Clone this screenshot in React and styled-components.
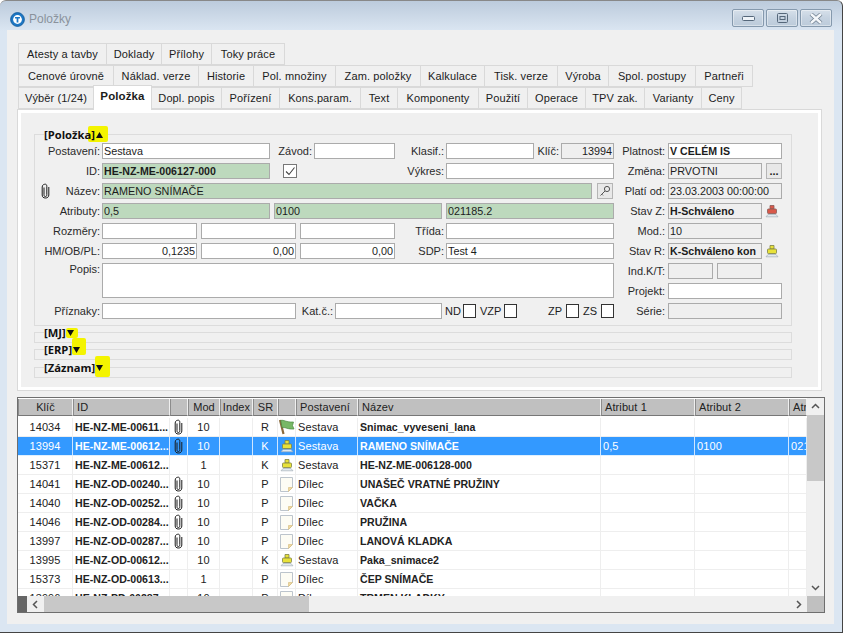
import React from "react";
import styled, { createGlobalStyle } from "styled-components";

const GlobalStyle = createGlobalStyle`
	html, body { margin: 0; padding: 0; background: #fff; }
	* { box-sizing: border-box; }
	body { font-family: "Liberation Sans", Arial, sans-serif; font-size: 11px; color: #1c1c1c; }
`;

const COLS = "55px 97px 18px 32px 33px 25px 18px 62px 243px 94px 94px 18px";

const tabRows = [
	[["Atesty a tavby", 88], ["Doklady", 55], ["Přílohy", 50], ["Toky práce", 73]],
	[["Cenové úrovně", 95], ["Náklad. verze", 85], ["Historie", 55], ["Pol. množiny", 82], ["Zam. položky", 85], ["Kalkulace", 64], ["Tisk. verze", 73], ["Výroba", 51], ["Spol. postupy", 87], ["Partneři", 57]],
	[["Výběr (1/24)", 75], ["Položka", 58, true], ["Dopl. popis", 70], ["Pořízení", 58], ["Kons.param.", 81], ["Text", 37], ["Komponenty", 81], ["Použití", 49], ["Operace", 58], ["TPV zak.", 59], ["Varianty", 57], ["Ceny", 40]],
];

const headers = ["Klíč", "ID", "", "Mod", "Index", "SR", "", "Postavení", "Název", "Atribut 1", "Atribut 2", "Atr"];

const rows = [
	{ key: "14034", id: "HE-NZ-ME-00611...", clip: true, mod: "10", sr: "R", icon: "flag", pos: "Sestava", name: "Snimac_vyveseni_lana" },
	{ key: "13994", id: "HE-NZ-ME-00612...", clip: true, mod: "10", sr: "K", icon: "stamp", pos: "Sestava", name: "RAMENO SNÍMAČE", a1: "0,5", a2: "0100", a3: "021185.2", selected: true },
	{ key: "15371", id: "HE-NZ-ME-00612...", mod: "1", sr: "K", icon: "stamp", pos: "Sestava", name: "HE-NZ-ME-006128-000" },
	{ key: "14041", id: "HE-NZ-OD-00240...", clip: true, mod: "10", sr: "P", icon: "doc", pos: "Dílec", name: "UNAŠEČ VRATNÉ PRUŽINY" },
	{ key: "14040", id: "HE-NZ-OD-00252...", clip: true, mod: "10", sr: "P", icon: "doc", pos: "Dílec", name: "VAČKA" },
	{ key: "14046", id: "HE-NZ-OD-00284...", clip: true, mod: "10", sr: "P", icon: "doc", pos: "Dílec", name: "PRUŽINA" },
	{ key: "13997", id: "HE-NZ-OD-00287...", clip: true, mod: "10", sr: "P", icon: "doc", pos: "Dílec", name: "LANOVÁ KLADKA" },
	{ key: "13995", id: "HE-NZ-OD-00612...", mod: "10", sr: "K", icon: "stamp", pos: "Sestava", name: "Paka_snimace2" },
	{ key: "15373", id: "HE-NZ-OD-00613...", mod: "1", sr: "P", icon: "doc", pos: "Dílec", name: "ČEP SNÍMAČE" },
	{ key: "13996", id: "HE-NZ-PD-00287...", mod: "10", sr: "P", icon: "doc", pos: "Díl", name: "TRMEN KLADKY" },
];

const Clip = ({ color = "#1a1a1a" }) => (
	<svg width="9" height="16" viewBox="0 0 9 16" fill="none" stroke={color} strokeWidth="1">
		<path d="M3 4.5V11.5C3 13 3.4 13.6 4.4 13.6S5.8 13 5.8 11.5V3.5C5.8 2 5.3 1.2 4.4 1.2C3.3 1.2 1.2 1.6 1.2 4V12C1.2 14 2.4 15 4.4 15S7.8 14 7.8 12V4" />
	</svg>
);

const Stamp = ({ top = "#e8e23a", base = "#7d8245" }) => (
	<svg width="14" height="14" viewBox="0 0 14 14">
		<path d="M5 1.5H9V5H5Z" fill={top} stroke={base} strokeWidth=".8" />
		<rect x="2.5" y="5" width="9" height="4.5" rx=".8" fill={top} stroke={base} strokeWidth=".8" />
		<path d="M3 10.5H11L13 12.8H1Z" fill="#e2e9ee" stroke="#9aa6ae" strokeWidth=".6" />
	</svg>
);

const Flag = () => (
	<svg width="17" height="16" viewBox="0 0 17 16">
		<path d="M2 1L5.5 15" stroke="#8a6a3c" strokeWidth="2.2" />
		<path d="M2.8 1.5C6 .5 8 3.5 15.5 3L14.5 6.5L16 10C10 10.5 7 8 4 8.5Z" fill="#78b866" stroke="#4b8a42" strokeWidth=".7" />
	</svg>
);

const Doc = () => (
	<svg width="15" height="17" viewBox="0 0 15 17">
		<path d="M1.5 1.5H13.5V11.5L9.5 15.5H1.5Z" fill="#fdfcf4" stroke="#bcc4cc" />
		<path d="M13.5 11.5L9.5 15.5V11.5Z" fill="#f0d9a0" stroke="#d5b878" strokeWidth=".6" />
	</svg>
);

const KeyIcon = () => (
	<svg width="12" height="12" viewBox="0 0 12 12" fill="none" stroke="#555" strokeWidth="1">
		<circle cx="8" cy="4" r="2.6" />
		<path d="M6 6L1.5 10.5M2.8 9.2L4 10.4" />
	</svg>
);

const rowIcon = { flag: <Flag />, stamp: <Stamp />, doc: <Doc /> };

const Window = styled.div`
	width: 843px;
	height: 633px;
	display: flex;
	flex-direction: column;
	border-right: 1px solid #444;
	border-bottom: 1px solid #444;
	border-top: 1px solid #888;
	border-radius: 6px 6px 0 0;
	background: linear-gradient(#bccbdc 0, #dbe6f2 30px, #dbe6f2 100%);
	padding: 0 8px 8px 7px;
`;

const TitleBar = styled.div`
	height: 29px;
	flex: none;
	display: flex;
	align-items: flex-start;
	gap: 4px;
	padding: 0 2px 0 3px;
	color: #8a929c;
	font: 12px "Liberation Sans", Arial, sans-serif;
`;

const TitleIcon = styled.svg`
	margin-top: 11px;
	flex: none;
`;

const Title = styled.span`
	line-height: 14px;
	margin-top: 11px;
	flex: 1;
`;

const WinButtons = styled.div`
	display: flex;
	gap: 2px;
	margin-top: 8px;
`;

const WinButton = styled.div`
	width: 32px;
	height: 18px;
	border: 1px solid #8599ad;
	border-radius: 2px;
	display: flex;
	align-items: center;
	justify-content: center;
	background: linear-gradient(#d6e0ea, #c5d2e0 50%, #bccbda);
	box-shadow: inset 0 0 0 1px rgba(255, 255, 255, 0.4);
`;

const Client = styled.div`
	flex: 1;
	background: #f0f0f0;
	padding: 13px 0 0 10px;
`;

const TabRow = styled.div`
	display: flex;
	height: 22px;
	margin-left: 1px;
`;

const Tab = styled.div`
	width: ${(p) => p.$w}px;
	height: ${(p) => (p.$active ? 25 : 22)}px;
	margin-top: ${(p) => (p.$active ? -2 : 0)}px;
	position: relative;
	z-index: ${(p) => (p.$active ? 2 : 0)};
	background: ${(p) => (p.$active ? "#fff" : "#f0f0f0")};
	border: 1px solid #d9d9d9;
	border-bottom: ${(p) => (p.$active ? "none" : "1px solid #d9d9d9")};
	margin-right: -1px;
	display: flex;
	align-items: center;
	justify-content: center;
	padding-bottom: ${(p) => (p.$active ? 4 : 0)}px;
	font-weight: ${(p) => (p.$active ? "bold" : "normal")};
	font-size: ${(p) => (p.$active ? 11.5 : 11)}px;
	letter-spacing: 0.12px;
	white-space: nowrap;
`;

const Panel = styled.div`
	width: 805px;
	height: 282px;
	border: 1px solid #d9d9d9;
	box-shadow: inset 0 0 0 3px #fff;
	padding: 24px 0 0 16px;
	display: flex;
	flex-direction: column;
`;

const Section = styled.div`
	width: 758px;
	height: ${(p) => p.$h}px;
	flex: none;
	margin-bottom: ${(p) => p.$mb}px;
	position: relative;
	border: 1px solid #dcdcdc;
`;

const Legend = styled.div`
	position: absolute;
	left: 9px;
	top: -7px;
	height: 13px;
	display: flex;
	align-items: center;
	background: #f0f0f0;
	font: bold 11.2px "Open Sans", "Noto Sans", sans-serif;
	color: #111;
`;

const Marker = styled.span`
	display: inline-flex;
	align-items: center;
	justify-content: center;
	position: relative;
	width: 7px;
	height: 13px;
	margin-left: 1px;
	&::before {
		content: "";
		position: absolute;
		z-index: 0;
		left: ${(p) => p.$l}px;
		top: ${(p) => p.$t}px;
		width: ${(p) => p.$w}px;
		height: ${(p) => p.$h}px;
		background: #f4f400;
		border-radius: 2px;
	}
	svg { position: relative; }
`;

const LegendText = styled.span`
	position: relative;
	z-index: 1;
`;

const FormBody = styled.div`
	display: flex;
	gap: 4px;
	padding: 8px 0 0 1px;
`;

const LeftCol = styled.div`
	width: 578px;
	display: flex;
	flex-direction: column;
	gap: 4px;
`;

const RightCol = styled.div`
	width: 164px;
	display: flex;
	flex-direction: column;
	gap: 4px;
`;

const Row = styled.div`
	display: flex;
	align-items: ${(p) => (p.$top ? "flex-start" : "center")};
	height: ${(p) => p.$h || 16}px;
	margin-top: ${(p) => p.$mt || 0}px;
`;

const Label = styled.label`
	width: ${(p) => p.$w}px;
	flex: none;
	display: flex;
	align-items: center;
	justify-content: ${(p) => (p.$between ? "space-between" : "flex-end")};
	padding-left: ${(p) => (p.$between ? 5 : 0)}px;
	padding-right: ${(p) => p.$pr ?? 2}px;
	white-space: nowrap;
	color: #2a2a2a;
`;

const fieldBg = { white: "#fff", green: "#bdd9bd", gray: "#efefef" };

const Field = styled.div`
	width: ${(p) => p.$w}px;
	height: ${(p) => p.$h || 16}px;
	flex: none;
	margin-left: ${(p) => p.$ml || 0}px;
	border: 1px solid #ababab;
	background: ${(p) => fieldBg[p.$bg || "white"]};
	padding: ${(p) => (p.$right ? "0 1px 0 0" : "0 0 0 1px")};
	text-align: ${(p) => (p.$right ? "right" : "left")};
	font-weight: ${(p) => (p.$bold ? "bold" : "normal")};
	font-size: ${(p) => (p.$bold ? 10.6 : 10.8)}px;
	line-height: 14px;
	white-space: nowrap;
	overflow: hidden;
`;

const Check = styled.div`
	width: ${(p) => p.$s || 13}px;
	height: 14px;
	flex: none;
	margin-left: ${(p) => p.$ml || 0}px;
	border: 1px solid ${(p) => (p.$soft ? "#777" : "#333")};
	background: #fff;
	display: flex;
	align-items: center;
	justify-content: center;
`;

const SmallButton = styled.div`
	width: 16px;
	height: 16px;
	flex: none;
	margin-left: ${(p) => p.$ml || 0}px;
	border: 1px solid #b5b5b5;
	background: #e8e8e8;
	display: flex;
	align-items: center;
	justify-content: center;
	font-weight: bold;
	line-height: 10px;
`;

const IconSlot = styled.div`
	width: 20px;
	flex: none;
	display: flex;
	justify-content: center;
`;

const SmallLabel = styled.span`
	flex: none;
	width: ${(p) => p.$w}px;
	margin-left: ${(p) => p.$ml || 0}px;
	white-space: nowrap;
`;

const GridFrame = styled.div`
	width: 808px;
	height: 216px;
	margin-top: 6px;
	border: 1px solid #6e6e6e;
	display: flex;
	flex-direction: column;
	background: #fff;
`;

const GridTop = styled.div`
	flex: 1;
	display: flex;
	min-height: 0;
`;

const GridTable = styled.div`
	width: 789px;
	overflow: hidden;
`;

const HeaderRow = styled.div`
	display: grid;
	grid-template-columns: ${COLS};
	height: 17px;
	margin: 1px 0 2px;
`;

const HeaderCell = styled.div`
	background: #c0c0c0;
	border-right: 1px solid #efefef;
	border-left: 1px solid #8c8c8c;
	border-bottom: 1px solid #777;
	display: flex;
	align-items: center;
	justify-content: ${(p) => (p.$left ? "flex-start" : "center")};
	padding-left: ${(p) => (p.$left ? 3 : 0)}px;
	letter-spacing: 0.1px;
	white-space: nowrap;
	overflow: hidden;
	color: #222;
`;

const DataRow = styled.div`
	display: grid;
	grid-template-columns: ${COLS};
	height: 19px;
	background: ${(p) => (p.$selected ? "#3399ff" : "#fff")};
	color: ${(p) => (p.$selected ? "#fff" : "#222")};
	border-bottom: 1px solid ${(p) => (p.$selected ? "#dff0ff" : "#eeeeee")};
`;

const DataCell = styled.div`
	border-right: 1px solid ${(p) => (p.$selected ? "#cfe6ff" : "#eeeeee")};
	display: flex;
	align-items: center;
	justify-content: ${(p) => (p.$left ? "flex-start" : "center")};
	padding-left: ${(p) => (p.$left ? 2 : 0)}px;
	font-weight: ${(p) => (p.$bold ? "bold" : "normal")};
	font-size: ${(p) => (p.$bold ? 10.6 : 11)}px;
	letter-spacing: ${(p) => (p.$bold ? 0 : 0.1)}px;
	white-space: nowrap;
	overflow: hidden;
`;

const VScroll = styled.div`
	width: 17px;
	background: #f0f0f0;
	display: flex;
	flex-direction: column;
`;

const ScrollArrow = styled.div`
	height: ${(p) => p.$size || 17}px;
	width: ${(p) => p.$w || "auto"};
	flex: none;
	display: flex;
	align-items: center;
	justify-content: center;
`;

const VThumb = styled.div`
	height: 66px;
	background: #c8c8c8;
	flex: none;
`;

const Spring = styled.div`
	flex: 1;
`;

const HScroll = styled.div`
	height: 16px;
	flex: none;
	display: flex;
	background: #f0f0f0;
`;

const HEnd = styled.div`
	width: 9px;
	background: #666;
	flex: none;
`;

const HThumb = styled.div`
	width: 265px;
	background: #c8c8c8;
	flex: none;
`;

const Corner = styled.div`
	width: 17px;
	background: #c0c0c0;
	flex: none;
`;

const Chevron = ({ d }) => (
	<svg width="9" height="9" viewBox="0 0 9 9" fill="none" stroke="#555" strokeWidth="1.5">
		<path d={d} />
	</svg>
);

const Tri = ({ up }) => (
	<svg width="7" height="6" viewBox="0 0 7 6">
		<path d={up ? "M3.5 0L7 6H0Z" : "M0 0H7L3.5 6Z"} fill="#111" />
	</svg>
);

const Collapsed = ({ title, h, mb, marker }) => (
	<Section $h={h} $mb={mb}>
		<Legend>
			<LegendText>{title}</LegendText>
			<Marker {...marker}>
				<Tri />
			</Marker>
		</Legend>
	</Section>
);

export default function App() {
	return (
		<>
			<GlobalStyle />
			<Window>
				<TitleBar>
					<TitleIcon width="15" height="15" viewBox="0 0 17 17">
						<circle cx="8.5" cy="8.5" r="7.8" fill="#1d77c4" stroke="#0f5a9c" />
						<circle cx="8.5" cy="8.5" r="5" fill="#fff" />
						<path d="M5.7 5.6H11.3V7.3H9.5V12H7.5V7.3H5.7Z" fill="#1d77c4" />
					</TitleIcon>
					<Title>Položky</Title>
					<WinButtons>
						<WinButton>
							<svg width="13" height="5"><rect x=".5" y=".5" width="12" height="4" rx="1" fill="#eef3f8" stroke="#55677a" /></svg>
						</WinButton>
						<WinButton>
							<svg width="11" height="10"><rect x=".5" y=".5" width="10" height="9" rx="1" fill="none" stroke="#55677a" /><rect x="3" y="3.5" width="5" height="3" fill="none" stroke="#55677a" /></svg>
						</WinButton>
						<WinButton>
							<svg width="14" height="11" viewBox="0 0 14 11"><path d="M2 1L12 10M12 1L2 10" stroke="#6f7f8f" strokeWidth="4" /><path d="M2 1L12 10M12 1L2 10" stroke="#f4f7fa" strokeWidth="2.4" /></svg>
						</WinButton>
					</WinButtons>
				</TitleBar>
				<Client>
					{tabRows.map((tabs, i) => (
						<TabRow key={i}>
							{tabs.map(([label, w, active]) => (
								<Tab key={label} $w={w + 1} $active={active}>{label}</Tab>
							))}
						</TabRow>
					))}
					<Panel>
						<Section $h={192} $mb={6}>
							<Legend>
								<LegendText>[Položka]</LegendText>
								<Marker $l={-8} $t={-2} $w={20} $h={16}>
									<Tri up />
								</Marker>
							</Legend>
							<FormBody>
								<LeftCol>
									<Row>
										<Label $w={66}>Postavení:</Label>
										<Field $w={168}>Sestava</Field>
										<Label $w={44}>Závod:</Label>
										<Field $w={81} />
										<Label $w={51}>Klasif.:</Label>
										<Field $w={88} />
										<Label $w={27}>Klíč:</Label>
										<Field $w={53} $bg="gray" $right>13994</Field>
									</Row>
									<Row>
										<Label $w={66}>ID:</Label>
										<Field $w={168} $bg="green" $bold>HE-NZ-ME-006127-000</Field>
										<Check $ml={13} $s={14} $soft>
											<svg width="10" height="9" viewBox="0 0 10 9" fill="none" stroke="#444" strokeWidth="1.1"><path d="M1 4.5L4 7.5L9.5 .5" /></svg>
										</Check>
										<Label $w={149}>Výkres:</Label>
										<Field $w={168} />
									</Row>
									<Row>
										<Label $w={66} $between><Clip />Název:</Label>
										<Field $w={490} $bg="green">RAMENO SNÍMAČE</Field>
										<SmallButton $ml={5}><KeyIcon /></SmallButton>
									</Row>
									<Row>
										<Label $w={66}>Atributy:</Label>
										<Field $w={168} $bg="green">0,5</Field>
										<Field $w={168} $ml={4} $bg="green">0100</Field>
										<Field $w={168} $ml={4} $bg="green">021185.2</Field>
									</Row>
									<Row>
										<Label $w={66}>Rozměry:</Label>
										<Field $w={95} />
										<Field $w={95} $ml={4} />
										<Field $w={95} $ml={4} />
										<Label $w={51}>Třída:</Label>
										<Field $w={168} />
									</Row>
									<Row>
										<Label $w={66}>HM/OB/PL:</Label>
										<Field $w={95} $right>0,1235</Field>
										<Field $w={95} $ml={4} $right>0,00</Field>
										<Field $w={95} $ml={4} $right>0,00</Field>
										<Label $w={51}>SDP:</Label>
										<Field $w={168}>Test 4</Field>
									</Row>
									<Row $h={35} $top>
										<Label $w={66}>Popis:</Label>
										<Field $w={512} $h={35} />
									</Row>
									<Row $mt={1}>
										<Label $w={66}>Příznaky:</Label>
										<Field $w={194} />
										<Label $w={39}>Kat.č.:</Label>
										<Field $w={107} />
										<SmallLabel $w={18} $ml={3}>ND</SmallLabel>
										<Check />
										<SmallLabel $w={24} $ml={4}>VZP</SmallLabel>
										<Check />
										<SmallLabel $w={18} $ml={31}>ZP</SmallLabel>
										<Check />
										<SmallLabel $w={18} $ml={4}>ZS</SmallLabel>
										<Check />
									</Row>
								</LeftCol>
								<RightCol>
									<Row>
										<Label $w={50} $pr={3}>Platnost:</Label>
										<Field $w={114} $bold>V CELÉM IS</Field>
									</Row>
									<Row>
										<Label $w={50} $pr={3}>Změna:</Label>
										<Field $w={94} $bg="gray">PRVOTNI</Field>
										<SmallButton $ml={4}>...</SmallButton>
									</Row>
									<Row>
										<Label $w={50} $pr={3}>Platí od:</Label>
										<Field $w={114} $bg="gray">23.03.2003 00:00:00</Field>
									</Row>
									<Row>
										<Label $w={50} $pr={3}>Stav Z:</Label>
										<Field $w={94} $bg="gray" $bold>H-Schváleno</Field>
										<IconSlot><Stamp top="#d9594a" base="#8a5a55" /></IconSlot>
									</Row>
									<Row>
										<Label $w={50} $pr={3}>Mod.:</Label>
										<Field $w={94} $bg="gray">10</Field>
									</Row>
									<Row>
										<Label $w={50} $pr={3}>Stav R:</Label>
										<Field $w={94} $bg="gray" $bold>K-Schváleno kon</Field>
										<IconSlot><Stamp /></IconSlot>
									</Row>
									<Row>
										<Label $w={50} $pr={3}>Ind.K/T:</Label>
										<Field $w={45} $bg="gray" />
										<Field $w={45} $ml={4} $bg="gray" />
									</Row>
									<Row>
										<Label $w={50} $pr={3}>Projekt:</Label>
										<Field $w={114} />
									</Row>
									<Row>
										<Label $w={50} $pr={3}>Série:</Label>
										<Field $w={114} $bg="gray" />
									</Row>
								</RightCol>
							</FormBody>
						</Section>
						<Collapsed title="[MJ]" h={11} mb={6} marker={{ $l: -1, $t: 2, $w: 12, $h: 10 }} />
						<Collapsed title="[ERP]" h={11} mb={7} marker={{ $l: -1, $t: -5, $w: 14, $h: 17 }} />
						<Collapsed title="[Záznam]" h={11} mb={0} marker={{ $l: -1, $t: -5, $w: 15, $h: 21 }} />
					</Panel>
					<GridFrame>
						<GridTop>
							<GridTable>
								<HeaderRow>
									{headers.map((h, i) => (
										<HeaderCell key={i} $left={i === 1 || i >= 7}>{h}</HeaderCell>
									))}
								</HeaderRow>
								{rows.map((r) => (
									<DataRow key={r.key} $selected={r.selected}>
										<DataCell $selected={r.selected}>{r.key}</DataCell>
										<DataCell $selected={r.selected} $left $bold>{r.id}</DataCell>
										<DataCell $selected={r.selected}>{r.clip && <Clip />}</DataCell>
										<DataCell $selected={r.selected}>{r.mod}</DataCell>
										<DataCell $selected={r.selected} />
										<DataCell $selected={r.selected}>{r.sr}</DataCell>
										<DataCell $selected={r.selected}>{rowIcon[r.icon]}</DataCell>
										<DataCell $selected={r.selected} $left>{r.pos}</DataCell>
										<DataCell $selected={r.selected} $left $bold>{r.name}</DataCell>
										<DataCell $selected={r.selected} $left>{r.a1}</DataCell>
										<DataCell $selected={r.selected} $left>{r.a2}</DataCell>
										<DataCell $selected={r.selected} $left>{r.a3}</DataCell>
									</DataRow>
								))}
							</GridTable>
							<VScroll>
								<ScrollArrow><Chevron d="M1 6L4.5 2.5L8 6" /></ScrollArrow>
								<VThumb />
								<Spring />
								<ScrollArrow><Chevron d="M1 3L4.5 6.5L8 3" /></ScrollArrow>
							</VScroll>
						</GridTop>
						<HScroll>
							<HEnd />
							<ScrollArrow $w="17px" $size={16}><Chevron d="M6 1L2.5 4.5L6 8" /></ScrollArrow>
							<HThumb />
							<Spring />
							<ScrollArrow $w="17px" $size={16}><Chevron d="M3 1L6.5 4.5L3 8" /></ScrollArrow>
							<Corner />
						</HScroll>
					</GridFrame>
				</Client>
			</Window>
		</>
	);
}
